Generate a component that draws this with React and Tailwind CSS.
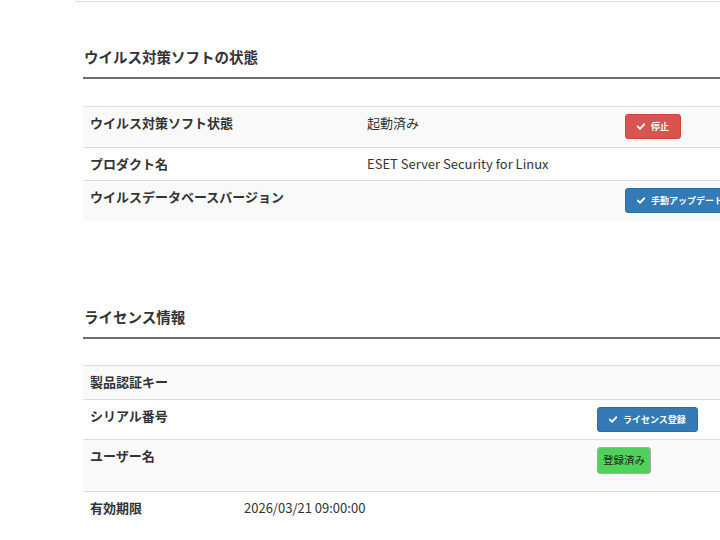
import React from "react";

const font = { fontFamily: '"Noto Sans CJK JP", "Noto Sans", sans-serif' };

function Check() {
  return (
    <svg viewBox="0 0 10 8" className="w-[8px] h-[7px] mr-[6px]" fill="none">
      <path d="M1 4.2 L3.8 6.8 L9 1.4" stroke="white" strokeWidth="2.3" strokeLinecap="square" />
    </svg>
  );
}

function Btn({ color, children }) {
  return (
    <span
      className={`inline-flex items-center h-[25px] pl-[11px] pr-[11px] rounded-[3px] text-white text-[9px] font-bold leading-none whitespace-nowrap border ${color}`}
    >
      <Check />
      {children}
    </span>
  );
}

function Row({ striped, cells, pt = "pt-[7px]", pb = "pb-[8px]" }) {
  return (
    <tr className={striped ? "bg-[#f9f9f9]" : "bg-white"}>
      {cells.map((c, i) => (
        <td
          key={i}
          className={`border-t border-[#dddddd] align-top px-[7px] ${pt} ${pb} text-[13px] leading-[17px] text-[#333] ${
            i === 0 ? "font-bold" : ""
          }`}
        >
          {c}
        </td>
      ))}
    </tr>
  );
}

export default function App() {
  return (
    <div className="w-[720px] h-[540px] overflow-hidden bg-white" style={font}>
      <div className="ml-[75px] h-[2px] border-l border-b border-[#dddddd] rounded-bl-[4px]" />
      <div className="ml-[83px] w-[720px]">
        <h4 className="mt-[45px] text-[14.5px] leading-[20px] font-bold text-[#333] pl-[1px] pb-[10px] border-b-2 border-[#6b6b6b]">
          ウイルス対策ソフトの状態
        </h4>
        <table className="mt-[27px] w-[720px] table-fixed border-collapse">
          <colgroup>
            <col className="w-[277px]" />
            <col className="w-[258px]" />
            <col />
          </colgroup>
          <tbody>
            <Row
              striped
              cells={[
                "ウイルス対策ソフト状態",
                "起動済み",
                <Btn color="bg-[#d9534f] border-[#d43f3a]">停止</Btn>,
              ]}
            />
            <Row
              cells={["プロダクト名", "ESET Server Security for Linux", ""]}
            />
            <Row
              striped
              cells={[
                "ウイルスデータベースバージョン",
                "",
                <Btn color="bg-[#337ab7] border-[#2e6da4]">手動アップデート</Btn>,
              ]}
            />
          </tbody>
        </table>

        <h4 className="mt-[86px] text-[14.5px] leading-[20px] font-bold text-[#333] pl-[1px] pb-[10px] border-b-2 border-[#6b6b6b]">
          ライセンス情報
        </h4>
        <table className="mt-[26px] w-[720px] table-fixed border-collapse">
          <colgroup>
            <col className="w-[154px]" />
            <col className="w-[353px]" />
            <col />
          </colgroup>
          <tbody>
            <Row striped pb="pb-[9px]" cells={["製品認証キー", "", ""]} />
            <Row
              pb="pb-[7px]"
              cells={[
                "シリアル番号",
                "",
                <Btn color="bg-[#337ab7] border-[#2e6da4]">ライセンス登録</Btn>,
              ]}
            />
            <Row
              striped
              pb="pb-[17px]"
              cells={[
                "ユーザー名",
                "",
                <span className="inline-flex items-center h-[27px] px-[5px] rounded-[3px] bg-[#4fd15a] border border-[#aaaaaa] text-[#222] text-[10.5px] leading-none whitespace-nowrap">
                  登録済み
                </span>,
              ]}
            />
            <Row cells={["有効期限", "2026/03/21 09:00:00", ""]} />
          </tbody>
        </table>
      </div>
    </div>
  );
}
